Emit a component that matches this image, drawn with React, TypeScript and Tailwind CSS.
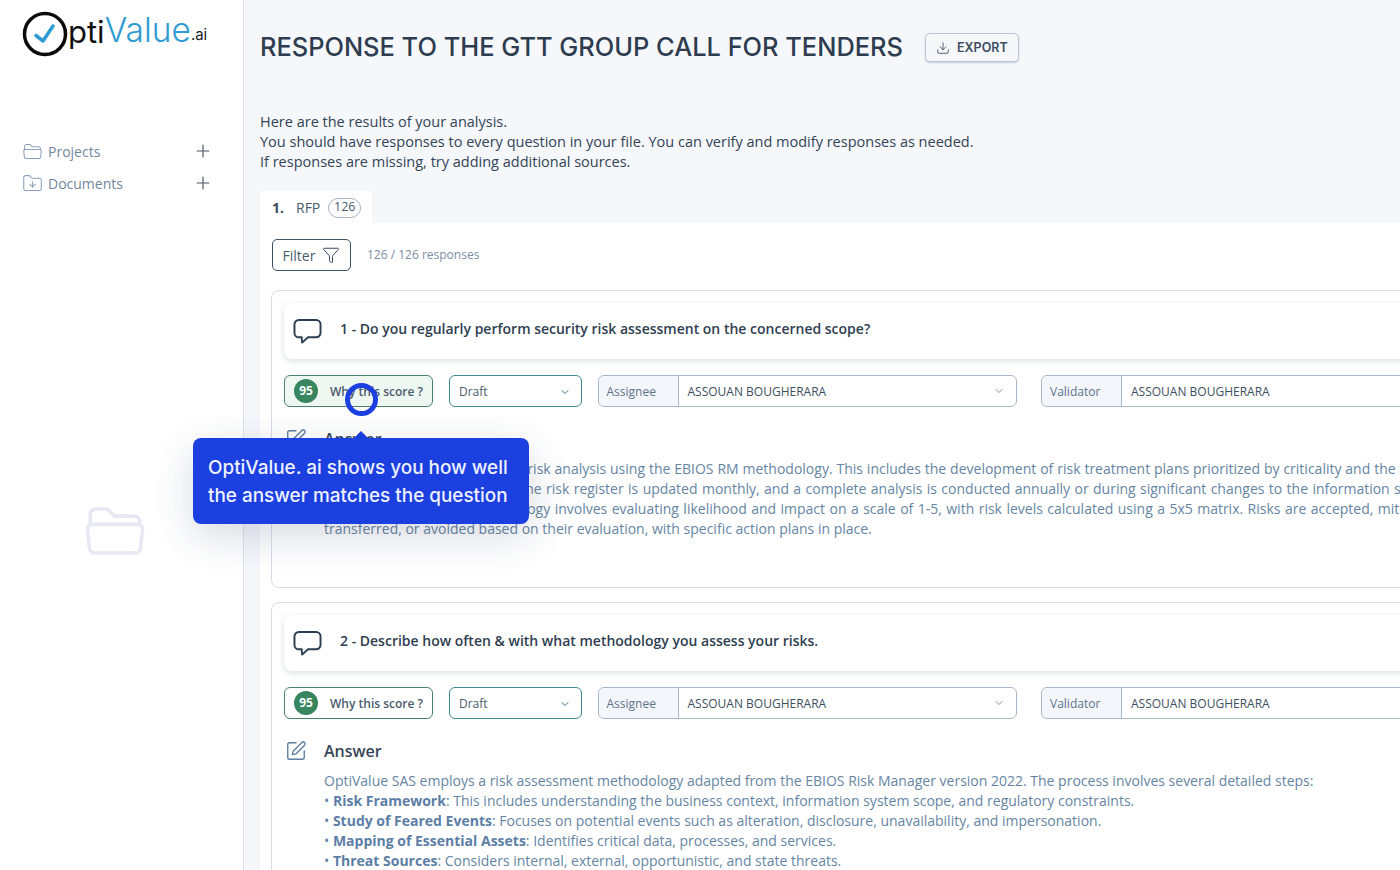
import { ChevronDown, Download, Funnel, Plus, SquarePen, FolderDown } from "lucide-react";

const bodyFont = "font-['Open_Sans',sans-serif]";

function FolderIcon({ className }: { className: string }) {
  return (
    <svg viewBox="0 0 24 24" fill="none" stroke="currentColor" strokeLinecap="round" strokeLinejoin="round" className={className}>
      <path d="M3 10V6a2 2 0 0 1 2-2h4.200l2.600 2.600H19a2 2 0 0 1 2 2V10" />
      <path d="M3.600 9.600h16.800a1.600 1.600 0 0 1 1.600 1.800l-.7 6.800a2 2 0 0 1-2 1.800H4.700a2 2 0 0 1-2-1.800l-.7-6.800a1.600 1.600 0 0 1 1.600-1.800z" />
    </svg>
  );
}

function BubbleIcon() {
  return (
    <svg viewBox="0 0 30 28" fill="none" stroke="#2c3e50" strokeWidth="2" strokeLinejoin="round" className="h-[27px] w-[29px]">
      <path d="M6 2h18a4.500 4.500 0 0 1 4.500 4.500v9a4.500 4.500 0 0 1-4.500 4.500h-8.500l-6 5.500c-.4-1.800-.6-3.600-.5-5.500H6a4.500 4.500 0 0 1-4.500-4.500v-9A4.500 4.500 0 0 1 6 2z" />
    </svg>
  );
}

function Logo() {
  return (
    <div className="flex h-[46px] items-center">
      <svg viewBox="0 0 46 46" fill="none" className="h-[46px] w-[46px] shrink-0">
        <circle cx="23" cy="23" r="20.500" stroke="#0b0b0b" strokeWidth="3.500" />
        <path d="M14 24.500l7 5.500L31 15" stroke="#2f9bd3" strokeWidth="3.500" strokeLinecap="round" strokeLinejoin="round" />
      </svg>
      <span className="mb-[6px] text-[31px] leading-none font-['Inter',sans-serif] font-normal text-[#111]">pti</span>
      <span className="mb-[6px] text-[33.500px] leading-none font-['Inter',sans-serif] font-light text-[#2f9bd3]">Value</span>
      <span className="mt-[1px] text-[15px] leading-none font-['Inter',sans-serif] text-[#222]">.ai</span>
    </div>
  );
}

function NavRow({ label, icon }: { label: string; icon: React.ReactNode }) {
  return (
    <div className="flex h-[32px] items-center">
      {icon}
      <span className="ml-[5px] text-[14px] text-[#72869e]">{label}</span>
      <Plus className="ml-auto h-[20px] w-[20px] text-[#4a5565]" strokeWidth={1.400} />
    </div>
  );
}

function ScoreBox({ highlighted }: { highlighted?: boolean }) {
  return (
    <div className={`flex h-[32px] w-[149px] shrink-0 items-center rounded-[6px] border border-[#4a7f6c] pl-[9px] ${highlighted ? "bg-[#eff7f3]" : "bg-white"}`}>
      <span className="flex h-[24px] w-[24px] items-center justify-center rounded-full bg-[#38865f] text-[12px] font-bold text-white">95</span>
      <span className="ml-[12px] pt-[1px] text-[12px] font-semibold text-[#4a5b6d]">Why this score ?</span>
    </div>
  );
}

function PersonField({ label, width }: { label: string; width: string }) {
  return (
    <div className={`flex h-[32px] shrink-0 rounded-[6px] border border-[#a9b8c9] bg-white ${width}`}>
      <span className="flex w-[80px] shrink-0 items-center rounded-l-[6px] border-r border-[#a9b8c9] bg-[#f3f6fb] pl-[8px] pt-[1px] text-[12px] text-[#5d7389]">{label}</span>
      <span className="flex flex-1 items-center pl-[9px] pt-[1px] text-[12px] text-[#3e4f61]">ASSOUAN BOUGHERARA</span>
      <ChevronDown className="mr-[11px] mt-[9px] h-[12px] w-[12px] text-[#7d8fa3]" />
    </div>
  );
}

function QuestionCard({ title, highlighted, answer, height }: { title: string; highlighted?: boolean; answer: React.ReactNode; height: string }) {
  return (
    <div className={`rounded-[8px] border border-[#d7deea] bg-white pl-[12px] pt-[12px] ${height}`}>
      <div className="flex h-[56px] items-center rounded-[8px] bg-white pl-[9px] shadow-[0_2px_6px_rgba(60,70,90,0.18)]">
        <BubbleIcon />
        <span className="mb-[5px] ml-[18px] text-[14px] font-semibold text-[#2f3e50]">{title}</span>
      </div>
      <div className="mt-[16px] flex items-center">
        <ScoreBox highlighted={highlighted} />
        <div className="ml-[16px] flex h-[32px] w-[133px] shrink-0 items-center justify-between rounded-[6px] border border-[#3f8a98] pl-[9px] pr-[10px] pt-[1px] text-[12px] text-[#4a5b6d]">
          Draft
          <ChevronDown className="h-[12px] w-[12px] text-[#3f6f85]" />
        </div>
        <div className="ml-[15.500px]"><PersonField label="Assignee" width="w-[419px]" /></div>
        <div className="ml-[24.500px]"><PersonField label="Validator" width="w-[419px]" /></div>
      </div>
      <div className="mt-[20px] flex items-start">
        <SquarePen className="ml-[1px] mt-[1px] h-[22px] w-[22px] text-[#5f7f9f]" strokeWidth={1.500} />
        <div className="ml-[17px]">
          <h3 className="h-[24px] text-[16px] leading-[24px] font-semibold text-[#374657]">Answer</h3>
          <p className="mt-[8px] whitespace-nowrap text-[14px] leading-[20px] text-[#6685a3]">{answer}</p>
        </div>
      </div>
    </div>
  );
}

export default function App() {
  return (
    <div className={`relative flex h-[870px] w-[1400px] overflow-hidden bg-[#f5f7fb] ${bodyFont}`}>
      <aside className="flex h-full w-[244px] shrink-0 flex-col border-r border-[#dde2ec] bg-white pl-[22px] pr-[30px] pt-[11px]">
        <Logo />
        <nav className="mt-[78px]">
          <NavRow label="Projects" icon={<FolderIcon className="h-[21px] w-[21px] stroke-[1.200] text-[#8da2ba]" />} />
          <NavRow label="Documents" icon={<FolderDown className="h-[21px] w-[21px] text-[#8da2ba]" strokeWidth={1.200} />} />
        </nav>
        <div className="ml-[60px] mt-[299px]">
          <FolderIcon className="h-[66px] w-[66px] stroke-[1.300] text-[#e6e9f3]" />
        </div>
      </aside>

      <main className="min-w-0 flex-1 overflow-hidden pl-[16px]">
        <div className="w-[1500px]">
          <div className="flex h-[95px] items-center">
            <h1 className="pb-[2px] font-['Inter',sans-serif] text-[25.400px] leading-none font-medium text-[#2d3c4e]">RESPONSE TO THE GTT GROUP CALL FOR TENDERS</h1>
            <button className="ml-[22px] flex h-[29px] w-[94px] items-center justify-center gap-[7px] rounded-[5px] border border-[#b8c6d8] bg-[#f5f7fb] pt-[1px] font-['Inter',sans-serif] text-[12.500px] font-semibold text-[#3d4e60] shadow-[0_1px_2px_rgba(90,110,140,0.3)]">
              <Download className="h-[14px] w-[14px]" strokeWidth={1.500} />
              EXPORT
            </button>
          </div>

          <p className="mt-[17px] text-[14.500px] leading-[20px] font-medium text-[#334456]">
            Here are the results of your analysis.<br />
            You should have responses to every question in your file. You can verify and modify responses as needed.<br />
            If responses are missing, try adding additional sources.
          </p>

          <div className="mt-[19px] flex h-[32px] w-[112px] items-center rounded-t-[4px] bg-white pl-[12px] text-[14px] text-[#4a5b6d]">
            <b className="font-bold text-[#3c4c5e]">1.</b>
            <span className="ml-[12px]">RFP</span>
            <span className="ml-[8px] mt-[1px] flex h-[20px] w-[33px] items-center justify-center rounded-full border border-[#a5b2c2] text-[12.500px]">126</span>
          </div>

          <section className="bg-white pl-[11px] pt-[16px]">
            <div className="flex items-center">
              <button className="ml-[1px] flex h-[32px] w-[79px] items-center justify-center gap-[7px] rounded-[5px] border border-[#3e5266] text-[14px] text-[#4a5b6d]">
                Filter
                <Funnel className="h-[18px] w-[18px] text-[#34465a]" strokeWidth={1.300} />
              </button>
              <span className="ml-[16px] text-[12px] text-[#7b8ea3]">126 / 126 responses</span>
            </div>

            <div className="mt-[19px] flex flex-col gap-[14px]">
              <QuestionCard
                highlighted
                height="h-[298px]"
                title="1 - Do you regularly perform security risk assessment on the concerned scope?"
                answer={
                  <>
                    <span className="[word-spacing:0.25px]">OptiValue SAS performs yearly risk analysis using the EBIOS RM methodology. This includes the development of risk treatment plans prioritized by criticality and the</span><br />
                    <span className="[word-spacing:0.75px]">to remediate identified risks. The risk register is updated monthly, and a complete analysis is conducted annually or during significant changes to the information s</span><br />
                    <span className="[word-spacing:0.8px]">This risk assessment methodology involves evaluating likelihood and impact on a scale of 1-5, with risk levels calculated using a 5x5 matrix. Risks are accepted, mit</span><br />
                    transferred, or avoided based on their evaluation, with specific action plans in place.
                  </>
                }
              />
              <QuestionCard
                height="h-[400px]"
                title="2 - Describe how often & with what methodology you assess your risks."
                answer={
                  <>
                    OptiValue SAS employs a risk assessment methodology adapted from the EBIOS Risk Manager version 2022. The process involves several detailed steps:<br />
                    • <b className="font-bold text-[#5c7ea6]">Risk Framework</b>: This includes understanding the business context, information system scope, and regulatory constraints.<br />
                    • <b className="font-bold text-[#5c7ea6]">Study of Feared Events</b>: Focuses on potential events such as alteration, disclosure, unavailability, and impersonation.<br />
                    • <b className="font-bold text-[#5c7ea6]">Mapping of Essential Assets</b>: Identifies critical data, processes, and services.<br />
                    • <b className="font-bold text-[#5c7ea6]">Threat Sources</b>: Considers internal, external, opportunistic, and state threats.
                  </>
                }
              />
            </div>
          </section>
        </div>
      </main>

      {/* guided tour overlay */}
      <div className="absolute left-[345px] top-[383px] h-[33px] w-[33px] rounded-full border-[5px] border-[#1c3fe0]" />
      <div className="absolute left-[354px] top-[431px] h-0 w-0 border-x-[7px] border-b-[7px] border-x-transparent border-b-[#1c3fe0]" />
      <div className="absolute left-[193px] top-[438px] flex h-[86px] w-[336px] items-center rounded-[8px] bg-[#1c3fe0] pl-[15px] pt-[1px] font-['Inter',sans-serif] text-[18.900px] leading-[28px] font-medium text-[#eef1ff] shadow-[0_12px_40px_rgba(40,50,90,0.18)]">
        <span>OptiValue. ai shows you how well<br />the answer matches the question</span>
      </div>
    </div>
  );
}
